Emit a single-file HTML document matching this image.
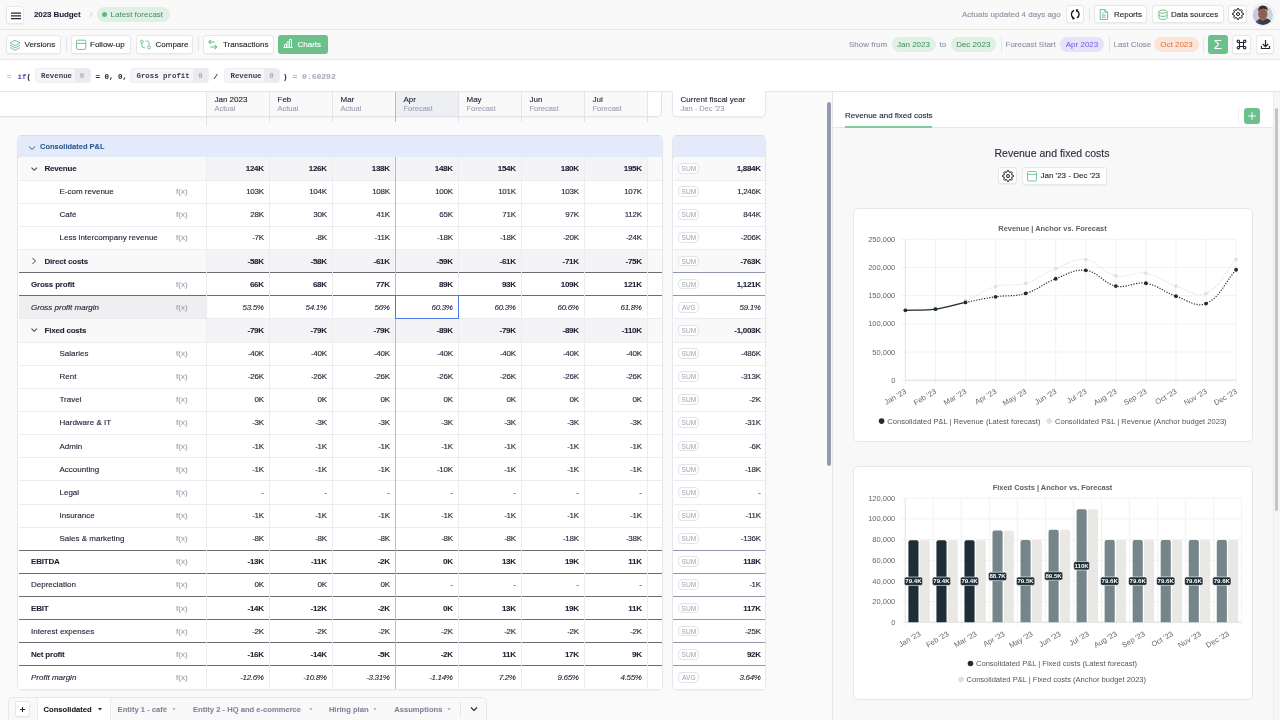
<!DOCTYPE html><html><head><meta charset='utf-8'><style>
*{box-sizing:border-box;margin:0;padding:0}
html,body{width:1280px;height:720px;overflow:hidden;background:#fafafa;font-family:"Liberation Sans",sans-serif;color:#1e2034;font-size:8px}
.abs{position:absolute}
.t{position:absolute;white-space:nowrap;line-height:10px;-webkit-text-stroke:0.12px currentColor}
.t[style*='font-weight:bold']{-webkit-text-stroke:0.08px currentColor}
.btn{position:absolute;background:#fff;border:1px solid #e6e7eb;border-radius:3px;box-shadow:0 1px 1px rgba(0,0,0,.04)}
.pill{position:absolute;border-radius:8px;line-height:15px;text-align:center;white-space:nowrap}
.sep{position:absolute;width:1px;background:#e4e5ea}
.mono{font-family:"Liberation Mono",monospace}
.row{position:absolute;left:0;width:645px}
.cell{position:absolute;top:0;height:100%;white-space:nowrap;text-align:right;padding-right:5px}
.badge{position:absolute;border:1px solid #e2e3e8;border-radius:3px;font-size:6.6px;color:#9ea1b0;text-align:center;background:#fff}
</style></head><body><div style='position:absolute;left:0;top:0;width:1280px;height:720px;overflow:hidden;will-change:transform'><div class='abs' style='left:0;top:0;width:1280px;height:30px;background:#f9f9fa;border-bottom:1px solid #e6e7eb'></div><div class='btn' style='left:5.5px;top:5.5px;width:18.5px;height:18px'><svg width='18' height='18' style='position:absolute;left:-1px;top:-1px' viewBox='0 0 18 18'><path d='M5 7.1h10M5 9.75h10M5 12.5h10' stroke='#23253a' stroke-width='1.25'/></svg></div><div class='t' style='left:34px;top:10px;font-weight:bold;letter-spacing:-0.1px'>2023 Budget</div><div class='t' style='left:90px;top:10px;color:#c5c7d0'>/</div><div class='pill' style='left:97px;top:7px;width:73px;height:15px;background:#dff0e4;color:#468c5e;text-align:left;padding-left:13.6px'>Latest forecast</div><div class='abs' style='left:102px;top:12px;width:5px;height:5px;border-radius:50%;background:#5dbb7c'></div><div class='t' style='left:962px;top:10px;color:#8d91a3'>Actuals updated 4 days ago</div><div class='btn' style='left:1065.5px;top:5.3px;width:18.7px;height:18px'><svg width='20' height='18' style='position:absolute;left:-1px;top:-1px' viewBox='0 0 20 18'><path d='M8.1 5.3 A4.2 4.2 0 0 0 7.6 12.9' fill='none' stroke='#111' stroke-width='1.3'/><path d='M10.5 5.3 A4.2 4.2 0 0 1 10.9 12.9' fill='none' stroke='#111' stroke-width='1.3'/><path d='M6.1 11.6 L9.2 13.5 L6.6 14.8Z M9.7 4.2 L12.4 4.6 L10.8 7.2Z' fill='#111'/></svg></div><div class='sep' style='left:1089px;top:8px;height:13px'></div><div class='btn' style='left:1094.4px;top:5.3px;width:53px;height:18px'><svg width='12' height='14' style='position:absolute;left:4px;top:1px' viewBox='0 0 12 14'><path d='M1.2 2.6H5.9L8.7 5.3V12.4H1.2Z M5.9 2.6V5.3H8.7' fill='none' stroke='#6cc08b' stroke-width='1' stroke-linejoin='round'/><path d='M2.9 6.1H4.6 M2.9 8.1H6.8 M2.9 10.2H6.8' stroke='#6cc08b' stroke-width='1'/></svg><div class='t' style='left:18.6px;top:4px;color:#1f2026'>Reports</div></div><div class='btn' style='left:1152px;top:5.3px;width:71.6px;height:18px'><svg width='12' height='14' style='position:absolute;left:3.5px;top:2px' viewBox='0 0 12 14'><ellipse cx='6' cy='3.6' rx='4.1' ry='1.6' fill='none' stroke='#6cc08b' stroke-width='1'/><path d='M1.9 3.6v6.3c0 .9 1.8 1.6 4.1 1.6s4.1-.7 4.1-1.6V3.6 M1.9 6.8c0 .9 1.8 1.6 4.1 1.6s4.1-.7 4.1-1.6' fill='none' stroke='#6cc08b' stroke-width='1'/></svg><div class='t' style='left:18px;top:4px;color:#1f2026'>Data sources</div></div><div class='btn' style='left:1228.4px;top:5.3px;width:19px;height:18px'><svg width='20' height='18' style='position:absolute;left:-1px;top:-1px' viewBox='0 0 20 18'><g transform='translate(10 9)'><path d='M3.82 -1.18 L5.47 -0.55 L5.47 0.55 L3.82 1.18 L3.54 1.87 L4.26 3.48 L3.48 4.26 L1.87 3.54 L1.18 3.82 L0.55 5.47 L-0.55 5.47 L-1.18 3.82 L-1.87 3.54 L-3.48 4.26 L-4.26 3.48 L-3.54 1.87 L-3.82 1.18 L-5.47 0.55 L-5.47 -0.55 L-3.82 -1.18 L-3.54 -1.87 L-4.26 -3.48 L-3.48 -4.26 L-1.87 -3.54 L-1.18 -3.82 L-0.55 -5.47 L0.55 -5.47 L1.18 -3.82 L1.87 -3.54 L3.48 -4.26 L4.26 -3.48 L3.54 -1.87Z' fill='none' stroke='#15161f' stroke-width='1' stroke-linejoin='round'/><circle r='1.5' fill='none' stroke='#15161f' stroke-width='1'/></g></svg></div><div class='abs' style='left:1251.5px;top:3px;width:23.2px;height:23px;border-radius:50%;background:#fff;border:1px solid #e9eaee'></div><svg width='20' height='20' style='position:absolute;left:1253px;top:4.6px' viewBox='0 0 20 20'><defs><clipPath id='av'><circle cx='10' cy='10' r='10'/></clipPath><linearGradient id='avbg' x1='0' x2='1'><stop offset='0' stop-color='#c9bde0'/><stop offset='.5' stop-color='#d8d6e0'/><stop offset='1' stop-color='#bfd3d3'/></linearGradient></defs><g clip-path='url(#av)'><rect width='20' height='20' fill='url(#avbg)'/><ellipse cx='9.8' cy='9.2' rx='4.6' ry='5.8' fill='#8f5e4c'/><path d='M4.8 6.5 Q5.5 0.5 10 0.6 Q14.8 0.8 14.8 6 Q13 3.5 10 3.8 Q6.5 4 4.8 6.5Z' fill='#3a2e2b'/><path d='M2 20 Q3 14.5 7 14 L10 15.5 L13.5 13.5 Q18 14 19.5 20Z' fill='#3a3a42'/><path d='M2 20 Q3 15 6 14.2 L6 20Z' fill='#5b4a78'/></g></svg><div class='abs' style='left:0;top:30px;width:1280px;height:30px;background:#f9f9fa;border-bottom:1px solid #e6e7eb'></div><div class='btn' style='left:5.5px;top:35.3px;width:55.5px;height:18.6px'><svg width='12' height='12' style='position:absolute;left:2.3px;top:2.4px' viewBox='0 0 12 12'><path d='M6 1.2 L11 3.9 L6 6.6 L1 3.9Z' fill='none' stroke='#6cc08b' stroke-width='0.9' stroke-linejoin='round'/><path d='M1 6.2 L6 8.9 L11 6.2 M1 8.5 L6 11.2 L11 8.5' fill='none' stroke='#6cc08b' stroke-width='0.9' stroke-linejoin='round'/></svg><div class='t' style='left:18px;top:4px;color:#1f2026'>Versions</div></div><div class='sep' style='left:66px;top:37px;height:14px'></div><div class='btn' style='left:71px;top:35.3px;width:60px;height:18.6px'><svg width='12' height='12' style='position:absolute;left:3px;top:2px' viewBox='0 0 12 12'><rect x='1.6' y='2.2' width='9.2' height='9.2' rx='1' fill='none' stroke='#6cc08b' stroke-width='0.95'/><path d='M1.6 5.4h9.2' stroke='#6cc08b' stroke-width='0.95'/></svg><div class='t' style='left:18px;top:4px;color:#1f2026'>Follow-up</div></div><div class='btn' style='left:136px;top:35.3px;width:57px;height:18.6px'><svg width='12' height='12' style='position:absolute;left:3px;top:2px' viewBox='0 0 12 12'><circle cx='1.9' cy='3.6' r='1.45' fill='none' stroke='#6cc08b' stroke-width='0.95'/><circle cx='9' cy='9.45' r='1.45' fill='none' stroke='#6cc08b' stroke-width='0.95'/><path d='M1.8 5.1 V7.3 Q1.8 9.95 5 9.95 M5.6 3 H7.2 Q9 3 9 5 V8' fill='none' stroke='#6cc08b' stroke-width='0.95'/></svg><div class='t' style='left:18.5px;top:4px;color:#1f2026'>Compare</div></div><div class='sep' style='left:198px;top:37px;height:14px'></div><div class='btn' style='left:203.3px;top:35.3px;width:71px;height:18.6px'><svg width='12' height='12' style='position:absolute;left:4px;top:2px' viewBox='0 0 12 12'><path d='M1.2 3.95H6.7 M2.9 1.9 0.9 3.95 2.9 6 M2.2 9H8.6 M6.7 6.9 8.8 9 6.7 11.1' fill='none' stroke='#6cc08b' stroke-width='1.05'/></svg><div class='t' style='left:18.6px;top:4px;color:#1f2026'>Transactions</div></div><div class='abs' style='left:278px;top:35px;width:50px;height:19px;background:#6cc08b;border-radius:3px'><svg width='12' height='12' style='position:absolute;left:4px;top:2px' viewBox='0 0 12 12'><path d='M1.5 10.5h9 M2.5 10.5V7.5h2v3 M5 10.5V5h2v5.5 M7.5 10.5V2.5h2v8' fill='none' stroke='#fff' stroke-width='0.9'/></svg><div class='t' style='left:19.5px;top:4.5px;color:#fff'>Charts</div></div><div class='t' style='left:849px;top:40px;color:#8d91a3'>Show from</div><div class='pill' style='left:891.5px;top:37px;width:44px;height:15px;background:#dff0e4;color:#3f8a58'>Jan 2023</div><div class='t' style='left:939.5px;top:40px;color:#8d91a3'>to</div><div class='pill' style='left:950.5px;top:37px;width:45.5px;height:15px;background:#dff0e4;color:#3f8a58'>Dec 2023</div><div class='sep' style='left:1000.5px;top:37px;height:15px'></div><div class='t' style='left:1005.5px;top:40px;color:#8d91a3'>Forecast Start</div><div class='pill' style='left:1060px;top:37px;width:44px;height:15px;background:#e5e3fa;color:#6a5ad8'>Apr 2023</div><div class='sep' style='left:1108.5px;top:37px;height:15px'></div><div class='t' style='left:1113.5px;top:40px;color:#8d91a3'>Last Close</div><div class='pill' style='left:1154px;top:37px;width:45px;height:15px;background:#fbe5d8;color:#d8703c'>Oct 2023</div><div class='sep' style='left:1203px;top:36px;height:17px;background:#e8e9ed'></div><div class='abs' style='left:1208px;top:35px;width:20px;height:19px;background:#6cc08b;border-radius:3px;color:#fff;font-size:13.5px;line-height:19px;text-align:center'>&#931;</div><div class='btn' style='left:1232.2px;top:35.3px;width:18.8px;height:18.5px'><svg width='19' height='19' style='position:absolute;left:-1px;top:-1px' viewBox='0 0 19 19'><path d='M7.5 7.5h4v4h-4z M7.5 7.5V6.3a1.2 1.2 0 1 0-1.2 1.2h1.2 M11.5 7.5V6.3a1.2 1.2 0 1 1 1.2 1.2h-1.2 M7.5 11.5v1.2a1.2 1.2 0 1 1-1.2-1.2h1.2 M11.5 11.5v1.2a1.2 1.2 0 1 0 1.2-1.2h-1.2' fill='none' stroke='#23253a' stroke-width='1.1'/></svg></div><div class='btn' style='left:1255.9px;top:35.3px;width:18.2px;height:18.5px'><svg width='19' height='19' style='position:absolute;left:-1px;top:-1px' viewBox='0 0 19 19'><path d='M9.5 5v6.5 M6.8 9l2.7 2.7L12.2 9 M5.5 11v2.5h8V11' fill='none' stroke='#23253a' stroke-width='1.2'/></svg></div><div class='abs' style='left:0;top:60px;width:1280px;height:32px;background:#fff;border-bottom:1px solid #e6e7eb'></div><div class='t mono' style='left:7px;top:72px;font-size:7.4px;color:#8d91a3'>=</div><div class='t mono' style='left:17.5px;top:71.5px;font-size:7.5px;font-weight:bold;color:#6a4fc0'>if<span style='color:#23253a'>(</span></div><div class='abs mono' style='left:34.5px;top:68px;width:56px;height:15px;background:#f6f6f8;border:1px solid #eeeef1;border-radius:3px;font-size:7.4px;font-weight:bold;line-height:14px;color:#3a3c50;white-space:nowrap'><span style='position:absolute;left:5.5px'>Revenue</span><span style='position:absolute;right:0;top:0;width:15px;height:13px;line-height:14px;background:#ebebef;color:#a5a8b5;text-align:center;border-radius:0 3px 3px 0'>0</span></div><div class='t mono' style='left:95.5px;top:71.5px;font-size:7.5px;font-weight:bold;color:#2a2c40'>= 0, 0,</div><div class='abs mono' style='left:130px;top:68px;width:79px;height:15px;background:#f6f6f8;border:1px solid #eeeef1;border-radius:3px;font-size:7.4px;font-weight:bold;line-height:14px;color:#3a3c50;white-space:nowrap'><span style='position:absolute;left:5.5px'>Gross profit</span><span style='position:absolute;right:0;top:0;width:15px;height:13px;line-height:14px;background:#ebebef;color:#a5a8b5;text-align:center;border-radius:0 3px 3px 0'>0</span></div><div class='t mono' style='left:213.5px;top:71.5px;font-size:7.5px;font-weight:bold;color:#2a2c40'>/</div><div class='abs mono' style='left:224px;top:68px;width:56px;height:15px;background:#f6f6f8;border:1px solid #eeeef1;border-radius:3px;font-size:7.4px;font-weight:bold;line-height:14px;color:#3a3c50;white-space:nowrap'><span style='position:absolute;left:5.5px'>Revenue</span><span style='position:absolute;right:0;top:0;width:15px;height:13px;line-height:14px;background:#ebebef;color:#a5a8b5;text-align:center;border-radius:0 3px 3px 0'>0</span></div><div class='t mono' style='left:283px;top:71.5px;font-size:7.5px;font-weight:bold;color:#2a2c40'>)</div><div class='t mono' style='left:292.5px;top:71.5px;font-size:8px;font-weight:bold;color:#a9acb8'>= 0.60292</div><div class='abs' style='left:0;top:92px;width:662px;height:24.5px;background:#fff;border-bottom-right-radius:5px;box-shadow:0 1px 1px rgba(0,0,0,.04)'></div><div class='abs' style='left:0;top:116px;width:657px;height:1px;background:#e3e4e9'></div><div class='abs' style='left:206px;top:92px;width:63px;height:24px;background:#f9f9fa'></div><div class='t' style='left:214.5px;top:94.5px'>Jan 2023</div><div class='t' style='left:214.5px;top:103.5px;color:#9ea2b3;font-size:7.5px'>Actual</div><div class='abs' style='left:269px;top:92px;width:63px;height:24px;background:#f9f9fa'></div><div class='t' style='left:277.5px;top:94.5px'>Feb</div><div class='t' style='left:277.5px;top:103.5px;color:#9ea2b3;font-size:7.5px'>Actual</div><div class='abs' style='left:332px;top:92px;width:63px;height:24px;background:#f9f9fa'></div><div class='t' style='left:340.5px;top:94.5px'>Mar</div><div class='t' style='left:340.5px;top:103.5px;color:#9ea2b3;font-size:7.5px'>Actual</div><div class='abs' style='left:395px;top:92px;width:63px;height:24px;background:#eeeff2'></div><div class='t' style='left:403.5px;top:94.5px'>Apr</div><div class='t' style='left:403.5px;top:103.5px;color:#9ea2b3;font-size:7.5px'>Forecast</div><div class='abs' style='left:458px;top:92px;width:63px;height:24px;background:#f9f9fa'></div><div class='t' style='left:466.5px;top:94.5px'>May</div><div class='t' style='left:466.5px;top:103.5px;color:#9ea2b3;font-size:7.5px'>Forecast</div><div class='abs' style='left:521px;top:92px;width:63px;height:24px;background:#f9f9fa'></div><div class='t' style='left:529.5px;top:94.5px'>Jun</div><div class='t' style='left:529.5px;top:103.5px;color:#9ea2b3;font-size:7.5px'>Forecast</div><div class='abs' style='left:584px;top:92px;width:63px;height:24px;background:#f9f9fa'></div><div class='t' style='left:592.5px;top:94.5px'>Jul</div><div class='t' style='left:592.5px;top:103.5px;color:#9ea2b3;font-size:7.5px'>Forecast</div><div class='abs' style='left:647px;top:92px;width:15px;height:25px;background:#fff;border:1px solid #e3e4e9;border-left:none;border-top:none;border-bottom-right-radius:5px'></div><div class='abs' style='left:206px;top:92px;width:1px;height:34px;background:#e3e4e9'></div><div class='abs' style='left:269px;top:92px;width:1px;height:30px;background:#e3e4e9'></div><div class='abs' style='left:332px;top:92px;width:1px;height:30px;background:#e3e4e9'></div><div class='abs' style='left:395px;top:92px;width:1px;height:30px;background:#a9b9f3'></div><div class='abs' style='left:458px;top:92px;width:1px;height:30px;background:#e3e4e9'></div><div class='abs' style='left:521px;top:92px;width:1px;height:30px;background:#e3e4e9'></div><div class='abs' style='left:584px;top:92px;width:1px;height:30px;background:#e3e4e9'></div><div class='abs' style='left:647px;top:92px;width:1px;height:30px;background:#e3e4e9'></div><div class='abs' style='left:672px;top:91px;width:93.5px;height:25.5px;background:#fff;border:1px solid #e6e7eb;border-top:none;border-radius:0 0 5px 5px;box-shadow:0 1px 2px rgba(0,0,0,.05)'></div><div class='t' style='left:680.5px;top:94.5px'>Current fiscal year</div><div class='t' style='left:680.5px;top:103.5px;color:#9ea2b3;font-size:7.5px'>Jan - Dec '23</div><div class='abs' style='left:17px;top:135px;width:645.5px;height:554.605px;background:#fff;border:1px solid #e6e7eb;border-top-color:#cfdcf4;border-radius:5px;box-shadow:0 1px 2px rgba(0,0,0,.04);overflow:hidden' id='tbl'><div class='abs' style='left:0;top:0;width:645px;height:21.5px;background:#e3ebfb;border-bottom:1px solid #c9d8f4'></div><svg width='8' height='6' style='position:absolute;left:9.5px;top:8.5px' viewBox='0 0 8 6'><path d='M1 1.5l3 3 3-3' fill='none' stroke='#2d5592' stroke-width='1'/></svg><div class='t' style='left:22px;top:6px;color:#2d5592;font-weight:bold;font-size:7.5px'>Consolidated P&amp;L</div></div><div class='abs' style='left:672px;top:135px;width:93.5px;height:554.605px;background:#fff;border:1px solid #e6e7eb;border-top-color:#cfdcf4;border-radius:5px;box-shadow:0 1px 2px rgba(0,0,0,.04);overflow:hidden'><div class='abs' style='left:0;top:0;width:93px;height:21.5px;background:#e3ebfb;border-bottom:1px solid #c9d8f4'></div></div><div class='abs' style='left:18.5px;top:157.00px;width:643px;height:23.14px;background:#f9f9fa'></div><div class='abs' style='left:206px;top:157.00px;width:441px;height:23.14px;background:#f4f4f6'></div><div class='abs' style='left:673.5px;top:157.00px;width:91px;height:23.14px;background:#f9f9fa'></div><svg width='8' height='6' style='position:absolute;left:30px;top:165.50px' viewBox='0 0 8 6'><path d='M1.5 1.6l2.7 2.7 2.7-2.7' fill='none' stroke='#3d3f55' stroke-width='1.05'/></svg><div class='t' style='left:44.5px;top:164.00px;font-weight:bold;font-style:normal;letter-spacing:-0.2px;'>Revenue</div><div class='t' style='left:206px;width:57.7px;text-align:right;top:164.00px;font-weight:bold;font-style:normal;letter-spacing:-0.3px;'>124K</div><div class='t' style='left:269px;width:57.7px;text-align:right;top:164.00px;font-weight:bold;font-style:normal;letter-spacing:-0.3px;'>126K</div><div class='t' style='left:332px;width:57.7px;text-align:right;top:164.00px;font-weight:bold;font-style:normal;letter-spacing:-0.3px;'>138K</div><div class='t' style='left:395px;width:57.7px;text-align:right;top:164.00px;font-weight:bold;font-style:normal;letter-spacing:-0.3px;'>148K</div><div class='t' style='left:458px;width:57.7px;text-align:right;top:164.00px;font-weight:bold;font-style:normal;letter-spacing:-0.3px;'>154K</div><div class='t' style='left:521px;width:57.7px;text-align:right;top:164.00px;font-weight:bold;font-style:normal;letter-spacing:-0.3px;'>180K</div><div class='t' style='left:584px;width:57.7px;text-align:right;top:164.00px;font-weight:bold;font-style:normal;letter-spacing:-0.3px;'>195K</div><div class='badge' style='left:678.2px;top:163.00px;width:21.3px;height:10.8px;line-height:9.8px;border-radius:4px'>SUM</div><div class='t' style='left:680px;width:80.7px;text-align:right;top:164.00px;font-weight:bold;font-style:normal;letter-spacing:-0.3px;'>1,884K</div><div class='abs' style='left:18.5px;top:180.13px;width:643px;height:23.14px;background:#fff'></div><div class='abs' style='left:673.5px;top:180.13px;width:91px;height:23.14px;background:#fff'></div><div class='abs' style='left:18.5px;top:179.63px;width:643px;height:1px;background:#ececf0'></div><div class='abs' style='left:673.5px;top:179.63px;width:91px;height:1px;background:#ececf0'></div><div class='t' style='left:59.5px;top:187.13px;font-weight:normal;font-style:normal;'>E-com revenue</div><div class='t' style='left:176px;top:187.13px;color:#9ea1ae'>f(x)</div><div class='t' style='left:206px;width:57.7px;text-align:right;top:187.13px;font-weight:normal;font-style:normal;letter-spacing:-0.3px;'>103K</div><div class='t' style='left:269px;width:57.7px;text-align:right;top:187.13px;font-weight:normal;font-style:normal;letter-spacing:-0.3px;'>104K</div><div class='t' style='left:332px;width:57.7px;text-align:right;top:187.13px;font-weight:normal;font-style:normal;letter-spacing:-0.3px;'>108K</div><div class='t' style='left:395px;width:57.7px;text-align:right;top:187.13px;font-weight:normal;font-style:normal;letter-spacing:-0.3px;'>100K</div><div class='t' style='left:458px;width:57.7px;text-align:right;top:187.13px;font-weight:normal;font-style:normal;letter-spacing:-0.3px;'>101K</div><div class='t' style='left:521px;width:57.7px;text-align:right;top:187.13px;font-weight:normal;font-style:normal;letter-spacing:-0.3px;'>103K</div><div class='t' style='left:584px;width:57.7px;text-align:right;top:187.13px;font-weight:normal;font-style:normal;letter-spacing:-0.3px;'>107K</div><div class='badge' style='left:678.2px;top:186.13px;width:21.3px;height:10.8px;line-height:9.8px;border-radius:4px'>SUM</div><div class='t' style='left:680px;width:80.7px;text-align:right;top:187.13px;font-weight:normal;font-style:normal;letter-spacing:-0.3px;'>1,246K</div><div class='abs' style='left:18.5px;top:203.27px;width:643px;height:23.14px;background:#fff'></div><div class='abs' style='left:673.5px;top:203.27px;width:91px;height:23.14px;background:#fff'></div><div class='abs' style='left:18.5px;top:202.77px;width:643px;height:1px;background:#ececf0'></div><div class='abs' style='left:673.5px;top:202.77px;width:91px;height:1px;background:#ececf0'></div><div class='t' style='left:59.5px;top:210.27px;font-weight:normal;font-style:normal;'>Café</div><div class='t' style='left:176px;top:210.27px;color:#9ea1ae'>f(x)</div><div class='t' style='left:206px;width:57.7px;text-align:right;top:210.27px;font-weight:normal;font-style:normal;letter-spacing:-0.3px;'>28K</div><div class='t' style='left:269px;width:57.7px;text-align:right;top:210.27px;font-weight:normal;font-style:normal;letter-spacing:-0.3px;'>30K</div><div class='t' style='left:332px;width:57.7px;text-align:right;top:210.27px;font-weight:normal;font-style:normal;letter-spacing:-0.3px;'>41K</div><div class='t' style='left:395px;width:57.7px;text-align:right;top:210.27px;font-weight:normal;font-style:normal;letter-spacing:-0.3px;'>65K</div><div class='t' style='left:458px;width:57.7px;text-align:right;top:210.27px;font-weight:normal;font-style:normal;letter-spacing:-0.3px;'>71K</div><div class='t' style='left:521px;width:57.7px;text-align:right;top:210.27px;font-weight:normal;font-style:normal;letter-spacing:-0.3px;'>97K</div><div class='t' style='left:584px;width:57.7px;text-align:right;top:210.27px;font-weight:normal;font-style:normal;letter-spacing:-0.3px;'>112K</div><div class='badge' style='left:678.2px;top:209.27px;width:21.3px;height:10.8px;line-height:9.8px;border-radius:4px'>SUM</div><div class='t' style='left:680px;width:80.7px;text-align:right;top:210.27px;font-weight:normal;font-style:normal;letter-spacing:-0.3px;'>844K</div><div class='abs' style='left:18.5px;top:226.41px;width:643px;height:23.14px;background:#fff'></div><div class='abs' style='left:673.5px;top:226.41px;width:91px;height:23.14px;background:#fff'></div><div class='abs' style='left:18.5px;top:225.91px;width:643px;height:1px;background:#ececf0'></div><div class='abs' style='left:673.5px;top:225.91px;width:91px;height:1px;background:#ececf0'></div><div class='t' style='left:59.5px;top:233.41px;font-weight:normal;font-style:normal;'>Less intercompany revenue</div><div class='t' style='left:176px;top:233.41px;color:#9ea1ae'>f(x)</div><div class='t' style='left:206px;width:57.7px;text-align:right;top:233.41px;font-weight:normal;font-style:normal;letter-spacing:-0.3px;'>-7K</div><div class='t' style='left:269px;width:57.7px;text-align:right;top:233.41px;font-weight:normal;font-style:normal;letter-spacing:-0.3px;'>-8K</div><div class='t' style='left:332px;width:57.7px;text-align:right;top:233.41px;font-weight:normal;font-style:normal;letter-spacing:-0.3px;'>-11K</div><div class='t' style='left:395px;width:57.7px;text-align:right;top:233.41px;font-weight:normal;font-style:normal;letter-spacing:-0.3px;'>-18K</div><div class='t' style='left:458px;width:57.7px;text-align:right;top:233.41px;font-weight:normal;font-style:normal;letter-spacing:-0.3px;'>-18K</div><div class='t' style='left:521px;width:57.7px;text-align:right;top:233.41px;font-weight:normal;font-style:normal;letter-spacing:-0.3px;'>-20K</div><div class='t' style='left:584px;width:57.7px;text-align:right;top:233.41px;font-weight:normal;font-style:normal;letter-spacing:-0.3px;'>-24K</div><div class='badge' style='left:678.2px;top:232.41px;width:21.3px;height:10.8px;line-height:9.8px;border-radius:4px'>SUM</div><div class='t' style='left:680px;width:80.7px;text-align:right;top:233.41px;font-weight:normal;font-style:normal;letter-spacing:-0.3px;'>-206K</div><div class='abs' style='left:18.5px;top:249.54px;width:643px;height:23.14px;background:#f9f9fa'></div><div class='abs' style='left:206px;top:249.54px;width:441px;height:23.14px;background:#f4f4f6'></div><div class='abs' style='left:673.5px;top:249.54px;width:91px;height:23.14px;background:#f9f9fa'></div><div class='abs' style='left:18.5px;top:249.04px;width:643px;height:1px;background:#ececf0'></div><div class='abs' style='left:673.5px;top:249.04px;width:91px;height:1px;background:#ececf0'></div><svg width='6' height='8' style='position:absolute;left:31px;top:257.04px' viewBox='0 0 6 8'><path d='M1.5 1l3 3-3 3' fill='none' stroke='#3a3c4e' stroke-width='1'/></svg><div class='t' style='left:44.5px;top:256.54px;font-weight:bold;font-style:normal;letter-spacing:-0.2px;'>Direct costs</div><div class='t' style='left:206px;width:57.7px;text-align:right;top:256.54px;font-weight:bold;font-style:normal;letter-spacing:-0.3px;'>-58K</div><div class='t' style='left:269px;width:57.7px;text-align:right;top:256.54px;font-weight:bold;font-style:normal;letter-spacing:-0.3px;'>-58K</div><div class='t' style='left:332px;width:57.7px;text-align:right;top:256.54px;font-weight:bold;font-style:normal;letter-spacing:-0.3px;'>-61K</div><div class='t' style='left:395px;width:57.7px;text-align:right;top:256.54px;font-weight:bold;font-style:normal;letter-spacing:-0.3px;'>-59K</div><div class='t' style='left:458px;width:57.7px;text-align:right;top:256.54px;font-weight:bold;font-style:normal;letter-spacing:-0.3px;'>-61K</div><div class='t' style='left:521px;width:57.7px;text-align:right;top:256.54px;font-weight:bold;font-style:normal;letter-spacing:-0.3px;'>-71K</div><div class='t' style='left:584px;width:57.7px;text-align:right;top:256.54px;font-weight:bold;font-style:normal;letter-spacing:-0.3px;'>-75K</div><div class='badge' style='left:678.2px;top:255.54px;width:21.3px;height:10.8px;line-height:9.8px;border-radius:4px'>SUM</div><div class='t' style='left:680px;width:80.7px;text-align:right;top:256.54px;font-weight:bold;font-style:normal;letter-spacing:-0.3px;'>-763K</div><div class='abs' style='left:18.5px;top:272.68px;width:643px;height:23.14px;background:#fff'></div><div class='abs' style='left:673.5px;top:272.68px;width:91px;height:23.14px;background:#fff'></div><div class='abs' style='left:18.5px;top:272.18px;width:643px;height:1px;background:#6c6d72'></div><div class='abs' style='left:672.5px;top:272.18px;width:92.5px;height:1px;background:#9096aa'></div><div class='t' style='left:31px;top:279.68px;font-weight:bold;font-style:normal;letter-spacing:-0.2px;'>Gross profit</div><div class='t' style='left:176px;top:279.68px;color:#9ea1ae'>f(x)</div><div class='t' style='left:206px;width:57.7px;text-align:right;top:279.68px;font-weight:bold;font-style:normal;letter-spacing:-0.3px;'>66K</div><div class='t' style='left:269px;width:57.7px;text-align:right;top:279.68px;font-weight:bold;font-style:normal;letter-spacing:-0.3px;'>68K</div><div class='t' style='left:332px;width:57.7px;text-align:right;top:279.68px;font-weight:bold;font-style:normal;letter-spacing:-0.3px;'>77K</div><div class='t' style='left:395px;width:57.7px;text-align:right;top:279.68px;font-weight:bold;font-style:normal;letter-spacing:-0.3px;'>89K</div><div class='t' style='left:458px;width:57.7px;text-align:right;top:279.68px;font-weight:bold;font-style:normal;letter-spacing:-0.3px;'>93K</div><div class='t' style='left:521px;width:57.7px;text-align:right;top:279.68px;font-weight:bold;font-style:normal;letter-spacing:-0.3px;'>109K</div><div class='t' style='left:584px;width:57.7px;text-align:right;top:279.68px;font-weight:bold;font-style:normal;letter-spacing:-0.3px;'>121K</div><div class='badge' style='left:678.2px;top:278.68px;width:21.3px;height:10.8px;line-height:9.8px;border-radius:4px'>SUM</div><div class='t' style='left:680px;width:80.7px;text-align:right;top:279.68px;font-weight:bold;font-style:normal;letter-spacing:-0.3px;'>1,121K</div><div class='abs' style='left:18.5px;top:295.81px;width:643px;height:23.14px;background:#fff'></div><div class='abs' style='left:18.5px;top:295.81px;width:187.5px;height:23.14px;background:#efeff2'></div><div class='abs' style='left:673.5px;top:295.81px;width:91px;height:23.14px;background:#fff'></div><div class='abs' style='left:18.5px;top:295.31px;width:643px;height:1px;background:#6c6d72'></div><div class='abs' style='left:672.5px;top:295.31px;width:92.5px;height:1px;background:#9096aa'></div><div class='t' style='left:31px;top:302.81px;font-weight:normal;font-style:italic;'>Gross profit margin</div><div class='t' style='left:176px;top:302.81px;color:#9ea1ae'>f(x)</div><div class='t' style='left:206px;width:57.7px;text-align:right;top:302.81px;font-weight:normal;font-style:italic;letter-spacing:-0.3px;'>53.5%</div><div class='t' style='left:269px;width:57.7px;text-align:right;top:302.81px;font-weight:normal;font-style:italic;letter-spacing:-0.3px;'>54.1%</div><div class='t' style='left:332px;width:57.7px;text-align:right;top:302.81px;font-weight:normal;font-style:italic;letter-spacing:-0.3px;'>56%</div><div class='t' style='left:395px;width:57.7px;text-align:right;top:302.81px;font-weight:normal;font-style:italic;letter-spacing:-0.3px;'>60.3%</div><div class='t' style='left:458px;width:57.7px;text-align:right;top:302.81px;font-weight:normal;font-style:italic;letter-spacing:-0.3px;'>60.3%</div><div class='t' style='left:521px;width:57.7px;text-align:right;top:302.81px;font-weight:normal;font-style:italic;letter-spacing:-0.3px;'>60.6%</div><div class='t' style='left:584px;width:57.7px;text-align:right;top:302.81px;font-weight:normal;font-style:italic;letter-spacing:-0.3px;'>61.8%</div><div class='badge' style='left:678.2px;top:301.81px;width:21.3px;height:10.8px;line-height:9.8px;border-radius:4px'>AVG</div><div class='t' style='left:680px;width:80.7px;text-align:right;top:302.81px;font-weight:normal;font-style:italic;letter-spacing:-0.3px;'>59.1%</div><div class='abs' style='left:18.5px;top:318.95px;width:643px;height:23.14px;background:#f9f9fa'></div><div class='abs' style='left:206px;top:318.95px;width:441px;height:23.14px;background:#f4f4f6'></div><div class='abs' style='left:673.5px;top:318.95px;width:91px;height:23.14px;background:#f9f9fa'></div><div class='abs' style='left:18.5px;top:318.45px;width:643px;height:1px;background:#ececf0'></div><div class='abs' style='left:673.5px;top:318.45px;width:91px;height:1px;background:#ececf0'></div><svg width='8' height='6' style='position:absolute;left:30px;top:327.45px' viewBox='0 0 8 6'><path d='M1.5 1.6l2.7 2.7 2.7-2.7' fill='none' stroke='#3d3f55' stroke-width='1.05'/></svg><div class='t' style='left:44.5px;top:325.95px;font-weight:bold;font-style:normal;letter-spacing:-0.2px;'>Fixed costs</div><div class='t' style='left:206px;width:57.7px;text-align:right;top:325.95px;font-weight:bold;font-style:normal;letter-spacing:-0.3px;'>-79K</div><div class='t' style='left:269px;width:57.7px;text-align:right;top:325.95px;font-weight:bold;font-style:normal;letter-spacing:-0.3px;'>-79K</div><div class='t' style='left:332px;width:57.7px;text-align:right;top:325.95px;font-weight:bold;font-style:normal;letter-spacing:-0.3px;'>-79K</div><div class='t' style='left:395px;width:57.7px;text-align:right;top:325.95px;font-weight:bold;font-style:normal;letter-spacing:-0.3px;'>-89K</div><div class='t' style='left:458px;width:57.7px;text-align:right;top:325.95px;font-weight:bold;font-style:normal;letter-spacing:-0.3px;'>-79K</div><div class='t' style='left:521px;width:57.7px;text-align:right;top:325.95px;font-weight:bold;font-style:normal;letter-spacing:-0.3px;'>-89K</div><div class='t' style='left:584px;width:57.7px;text-align:right;top:325.95px;font-weight:bold;font-style:normal;letter-spacing:-0.3px;'>-110K</div><div class='badge' style='left:678.2px;top:324.95px;width:21.3px;height:10.8px;line-height:9.8px;border-radius:4px'>SUM</div><div class='t' style='left:680px;width:80.7px;text-align:right;top:325.95px;font-weight:bold;font-style:normal;letter-spacing:-0.3px;'>-1,003K</div><div class='abs' style='left:18.5px;top:342.08px;width:643px;height:23.14px;background:#fff'></div><div class='abs' style='left:673.5px;top:342.08px;width:91px;height:23.14px;background:#fff'></div><div class='abs' style='left:18.5px;top:341.58px;width:643px;height:1px;background:#ececf0'></div><div class='abs' style='left:673.5px;top:341.58px;width:91px;height:1px;background:#ececf0'></div><div class='t' style='left:59.5px;top:349.08px;font-weight:normal;font-style:normal;'>Salaries</div><div class='t' style='left:176px;top:349.08px;color:#9ea1ae'>f(x)</div><div class='t' style='left:206px;width:57.7px;text-align:right;top:349.08px;font-weight:normal;font-style:normal;letter-spacing:-0.3px;'>-40K</div><div class='t' style='left:269px;width:57.7px;text-align:right;top:349.08px;font-weight:normal;font-style:normal;letter-spacing:-0.3px;'>-40K</div><div class='t' style='left:332px;width:57.7px;text-align:right;top:349.08px;font-weight:normal;font-style:normal;letter-spacing:-0.3px;'>-40K</div><div class='t' style='left:395px;width:57.7px;text-align:right;top:349.08px;font-weight:normal;font-style:normal;letter-spacing:-0.3px;'>-40K</div><div class='t' style='left:458px;width:57.7px;text-align:right;top:349.08px;font-weight:normal;font-style:normal;letter-spacing:-0.3px;'>-40K</div><div class='t' style='left:521px;width:57.7px;text-align:right;top:349.08px;font-weight:normal;font-style:normal;letter-spacing:-0.3px;'>-40K</div><div class='t' style='left:584px;width:57.7px;text-align:right;top:349.08px;font-weight:normal;font-style:normal;letter-spacing:-0.3px;'>-40K</div><div class='badge' style='left:678.2px;top:348.08px;width:21.3px;height:10.8px;line-height:9.8px;border-radius:4px'>SUM</div><div class='t' style='left:680px;width:80.7px;text-align:right;top:349.08px;font-weight:normal;font-style:normal;letter-spacing:-0.3px;'>-486K</div><div class='abs' style='left:18.5px;top:365.22px;width:643px;height:23.14px;background:#fff'></div><div class='abs' style='left:673.5px;top:365.22px;width:91px;height:23.14px;background:#fff'></div><div class='abs' style='left:18.5px;top:364.72px;width:643px;height:1px;background:#ececf0'></div><div class='abs' style='left:673.5px;top:364.72px;width:91px;height:1px;background:#ececf0'></div><div class='t' style='left:59.5px;top:372.22px;font-weight:normal;font-style:normal;'>Rent</div><div class='t' style='left:176px;top:372.22px;color:#9ea1ae'>f(x)</div><div class='t' style='left:206px;width:57.7px;text-align:right;top:372.22px;font-weight:normal;font-style:normal;letter-spacing:-0.3px;'>-26K</div><div class='t' style='left:269px;width:57.7px;text-align:right;top:372.22px;font-weight:normal;font-style:normal;letter-spacing:-0.3px;'>-26K</div><div class='t' style='left:332px;width:57.7px;text-align:right;top:372.22px;font-weight:normal;font-style:normal;letter-spacing:-0.3px;'>-26K</div><div class='t' style='left:395px;width:57.7px;text-align:right;top:372.22px;font-weight:normal;font-style:normal;letter-spacing:-0.3px;'>-26K</div><div class='t' style='left:458px;width:57.7px;text-align:right;top:372.22px;font-weight:normal;font-style:normal;letter-spacing:-0.3px;'>-26K</div><div class='t' style='left:521px;width:57.7px;text-align:right;top:372.22px;font-weight:normal;font-style:normal;letter-spacing:-0.3px;'>-26K</div><div class='t' style='left:584px;width:57.7px;text-align:right;top:372.22px;font-weight:normal;font-style:normal;letter-spacing:-0.3px;'>-26K</div><div class='badge' style='left:678.2px;top:371.22px;width:21.3px;height:10.8px;line-height:9.8px;border-radius:4px'>SUM</div><div class='t' style='left:680px;width:80.7px;text-align:right;top:372.22px;font-weight:normal;font-style:normal;letter-spacing:-0.3px;'>-313K</div><div class='abs' style='left:18.5px;top:388.35px;width:643px;height:23.14px;background:#fff'></div><div class='abs' style='left:673.5px;top:388.35px;width:91px;height:23.14px;background:#fff'></div><div class='abs' style='left:18.5px;top:387.85px;width:643px;height:1px;background:#ececf0'></div><div class='abs' style='left:673.5px;top:387.85px;width:91px;height:1px;background:#ececf0'></div><div class='t' style='left:59.5px;top:395.35px;font-weight:normal;font-style:normal;'>Travel</div><div class='t' style='left:176px;top:395.35px;color:#9ea1ae'>f(x)</div><div class='t' style='left:206px;width:57.7px;text-align:right;top:395.35px;font-weight:normal;font-style:normal;letter-spacing:-0.3px;'>0K</div><div class='t' style='left:269px;width:57.7px;text-align:right;top:395.35px;font-weight:normal;font-style:normal;letter-spacing:-0.3px;'>0K</div><div class='t' style='left:332px;width:57.7px;text-align:right;top:395.35px;font-weight:normal;font-style:normal;letter-spacing:-0.3px;'>0K</div><div class='t' style='left:395px;width:57.7px;text-align:right;top:395.35px;font-weight:normal;font-style:normal;letter-spacing:-0.3px;'>0K</div><div class='t' style='left:458px;width:57.7px;text-align:right;top:395.35px;font-weight:normal;font-style:normal;letter-spacing:-0.3px;'>0K</div><div class='t' style='left:521px;width:57.7px;text-align:right;top:395.35px;font-weight:normal;font-style:normal;letter-spacing:-0.3px;'>0K</div><div class='t' style='left:584px;width:57.7px;text-align:right;top:395.35px;font-weight:normal;font-style:normal;letter-spacing:-0.3px;'>0K</div><div class='badge' style='left:678.2px;top:394.35px;width:21.3px;height:10.8px;line-height:9.8px;border-radius:4px'>SUM</div><div class='t' style='left:680px;width:80.7px;text-align:right;top:395.35px;font-weight:normal;font-style:normal;letter-spacing:-0.3px;'>-2K</div><div class='abs' style='left:18.5px;top:411.49px;width:643px;height:23.14px;background:#fff'></div><div class='abs' style='left:673.5px;top:411.49px;width:91px;height:23.14px;background:#fff'></div><div class='abs' style='left:18.5px;top:410.99px;width:643px;height:1px;background:#ececf0'></div><div class='abs' style='left:673.5px;top:410.99px;width:91px;height:1px;background:#ececf0'></div><div class='t' style='left:59.5px;top:418.49px;font-weight:normal;font-style:normal;'>Hardware &amp; IT</div><div class='t' style='left:176px;top:418.49px;color:#9ea1ae'>f(x)</div><div class='t' style='left:206px;width:57.7px;text-align:right;top:418.49px;font-weight:normal;font-style:normal;letter-spacing:-0.3px;'>-3K</div><div class='t' style='left:269px;width:57.7px;text-align:right;top:418.49px;font-weight:normal;font-style:normal;letter-spacing:-0.3px;'>-3K</div><div class='t' style='left:332px;width:57.7px;text-align:right;top:418.49px;font-weight:normal;font-style:normal;letter-spacing:-0.3px;'>-3K</div><div class='t' style='left:395px;width:57.7px;text-align:right;top:418.49px;font-weight:normal;font-style:normal;letter-spacing:-0.3px;'>-3K</div><div class='t' style='left:458px;width:57.7px;text-align:right;top:418.49px;font-weight:normal;font-style:normal;letter-spacing:-0.3px;'>-3K</div><div class='t' style='left:521px;width:57.7px;text-align:right;top:418.49px;font-weight:normal;font-style:normal;letter-spacing:-0.3px;'>-3K</div><div class='t' style='left:584px;width:57.7px;text-align:right;top:418.49px;font-weight:normal;font-style:normal;letter-spacing:-0.3px;'>-3K</div><div class='badge' style='left:678.2px;top:417.49px;width:21.3px;height:10.8px;line-height:9.8px;border-radius:4px'>SUM</div><div class='t' style='left:680px;width:80.7px;text-align:right;top:418.49px;font-weight:normal;font-style:normal;letter-spacing:-0.3px;'>-31K</div><div class='abs' style='left:18.5px;top:434.62px;width:643px;height:23.14px;background:#fff'></div><div class='abs' style='left:673.5px;top:434.62px;width:91px;height:23.14px;background:#fff'></div><div class='abs' style='left:18.5px;top:434.12px;width:643px;height:1px;background:#ececf0'></div><div class='abs' style='left:673.5px;top:434.12px;width:91px;height:1px;background:#ececf0'></div><div class='t' style='left:59.5px;top:441.62px;font-weight:normal;font-style:normal;'>Admin</div><div class='t' style='left:176px;top:441.62px;color:#9ea1ae'>f(x)</div><div class='t' style='left:206px;width:57.7px;text-align:right;top:441.62px;font-weight:normal;font-style:normal;letter-spacing:-0.3px;'>-1K</div><div class='t' style='left:269px;width:57.7px;text-align:right;top:441.62px;font-weight:normal;font-style:normal;letter-spacing:-0.3px;'>-1K</div><div class='t' style='left:332px;width:57.7px;text-align:right;top:441.62px;font-weight:normal;font-style:normal;letter-spacing:-0.3px;'>-1K</div><div class='t' style='left:395px;width:57.7px;text-align:right;top:441.62px;font-weight:normal;font-style:normal;letter-spacing:-0.3px;'>-1K</div><div class='t' style='left:458px;width:57.7px;text-align:right;top:441.62px;font-weight:normal;font-style:normal;letter-spacing:-0.3px;'>-1K</div><div class='t' style='left:521px;width:57.7px;text-align:right;top:441.62px;font-weight:normal;font-style:normal;letter-spacing:-0.3px;'>-1K</div><div class='t' style='left:584px;width:57.7px;text-align:right;top:441.62px;font-weight:normal;font-style:normal;letter-spacing:-0.3px;'>-1K</div><div class='badge' style='left:678.2px;top:440.62px;width:21.3px;height:10.8px;line-height:9.8px;border-radius:4px'>SUM</div><div class='t' style='left:680px;width:80.7px;text-align:right;top:441.62px;font-weight:normal;font-style:normal;letter-spacing:-0.3px;'>-6K</div><div class='abs' style='left:18.5px;top:457.75px;width:643px;height:23.14px;background:#fff'></div><div class='abs' style='left:673.5px;top:457.75px;width:91px;height:23.14px;background:#fff'></div><div class='abs' style='left:18.5px;top:457.25px;width:643px;height:1px;background:#ececf0'></div><div class='abs' style='left:673.5px;top:457.25px;width:91px;height:1px;background:#ececf0'></div><div class='t' style='left:59.5px;top:464.75px;font-weight:normal;font-style:normal;'>Accounting</div><div class='t' style='left:176px;top:464.75px;color:#9ea1ae'>f(x)</div><div class='t' style='left:206px;width:57.7px;text-align:right;top:464.75px;font-weight:normal;font-style:normal;letter-spacing:-0.3px;'>-1K</div><div class='t' style='left:269px;width:57.7px;text-align:right;top:464.75px;font-weight:normal;font-style:normal;letter-spacing:-0.3px;'>-1K</div><div class='t' style='left:332px;width:57.7px;text-align:right;top:464.75px;font-weight:normal;font-style:normal;letter-spacing:-0.3px;'>-1K</div><div class='t' style='left:395px;width:57.7px;text-align:right;top:464.75px;font-weight:normal;font-style:normal;letter-spacing:-0.3px;'>-10K</div><div class='t' style='left:458px;width:57.7px;text-align:right;top:464.75px;font-weight:normal;font-style:normal;letter-spacing:-0.3px;'>-1K</div><div class='t' style='left:521px;width:57.7px;text-align:right;top:464.75px;font-weight:normal;font-style:normal;letter-spacing:-0.3px;'>-1K</div><div class='t' style='left:584px;width:57.7px;text-align:right;top:464.75px;font-weight:normal;font-style:normal;letter-spacing:-0.3px;'>-1K</div><div class='badge' style='left:678.2px;top:463.75px;width:21.3px;height:10.8px;line-height:9.8px;border-radius:4px'>SUM</div><div class='t' style='left:680px;width:80.7px;text-align:right;top:464.75px;font-weight:normal;font-style:normal;letter-spacing:-0.3px;'>-18K</div><div class='abs' style='left:18.5px;top:480.89px;width:643px;height:23.14px;background:#fff'></div><div class='abs' style='left:673.5px;top:480.89px;width:91px;height:23.14px;background:#fff'></div><div class='abs' style='left:18.5px;top:480.39px;width:643px;height:1px;background:#ececf0'></div><div class='abs' style='left:673.5px;top:480.39px;width:91px;height:1px;background:#ececf0'></div><div class='t' style='left:59.5px;top:487.89px;font-weight:normal;font-style:normal;'>Legal</div><div class='t' style='left:176px;top:487.89px;color:#9ea1ae'>f(x)</div><div class='t' style='left:206px;width:57.7px;text-align:right;top:487.89px;font-weight:normal;font-style:normal;letter-spacing:-0.3px;'>-</div><div class='t' style='left:269px;width:57.7px;text-align:right;top:487.89px;font-weight:normal;font-style:normal;letter-spacing:-0.3px;'>-</div><div class='t' style='left:332px;width:57.7px;text-align:right;top:487.89px;font-weight:normal;font-style:normal;letter-spacing:-0.3px;'>-</div><div class='t' style='left:395px;width:57.7px;text-align:right;top:487.89px;font-weight:normal;font-style:normal;letter-spacing:-0.3px;'>-</div><div class='t' style='left:458px;width:57.7px;text-align:right;top:487.89px;font-weight:normal;font-style:normal;letter-spacing:-0.3px;'>-</div><div class='t' style='left:521px;width:57.7px;text-align:right;top:487.89px;font-weight:normal;font-style:normal;letter-spacing:-0.3px;'>-</div><div class='t' style='left:584px;width:57.7px;text-align:right;top:487.89px;font-weight:normal;font-style:normal;letter-spacing:-0.3px;'>-</div><div class='badge' style='left:678.2px;top:486.89px;width:21.3px;height:10.8px;line-height:9.8px;border-radius:4px'>SUM</div><div class='t' style='left:680px;width:80.7px;text-align:right;top:487.89px;font-weight:normal;font-style:normal;letter-spacing:-0.3px;'>-</div><div class='abs' style='left:18.5px;top:504.03px;width:643px;height:23.14px;background:#fff'></div><div class='abs' style='left:673.5px;top:504.03px;width:91px;height:23.14px;background:#fff'></div><div class='abs' style='left:18.5px;top:503.53px;width:643px;height:1px;background:#ececf0'></div><div class='abs' style='left:673.5px;top:503.53px;width:91px;height:1px;background:#ececf0'></div><div class='t' style='left:59.5px;top:511.03px;font-weight:normal;font-style:normal;'>Insurance</div><div class='t' style='left:176px;top:511.03px;color:#9ea1ae'>f(x)</div><div class='t' style='left:206px;width:57.7px;text-align:right;top:511.03px;font-weight:normal;font-style:normal;letter-spacing:-0.3px;'>-1K</div><div class='t' style='left:269px;width:57.7px;text-align:right;top:511.03px;font-weight:normal;font-style:normal;letter-spacing:-0.3px;'>-1K</div><div class='t' style='left:332px;width:57.7px;text-align:right;top:511.03px;font-weight:normal;font-style:normal;letter-spacing:-0.3px;'>-1K</div><div class='t' style='left:395px;width:57.7px;text-align:right;top:511.03px;font-weight:normal;font-style:normal;letter-spacing:-0.3px;'>-1K</div><div class='t' style='left:458px;width:57.7px;text-align:right;top:511.03px;font-weight:normal;font-style:normal;letter-spacing:-0.3px;'>-1K</div><div class='t' style='left:521px;width:57.7px;text-align:right;top:511.03px;font-weight:normal;font-style:normal;letter-spacing:-0.3px;'>-1K</div><div class='t' style='left:584px;width:57.7px;text-align:right;top:511.03px;font-weight:normal;font-style:normal;letter-spacing:-0.3px;'>-1K</div><div class='badge' style='left:678.2px;top:510.03px;width:21.3px;height:10.8px;line-height:9.8px;border-radius:4px'>SUM</div><div class='t' style='left:680px;width:80.7px;text-align:right;top:511.03px;font-weight:normal;font-style:normal;letter-spacing:-0.3px;'>-11K</div><div class='abs' style='left:18.5px;top:527.16px;width:643px;height:23.14px;background:#fff'></div><div class='abs' style='left:673.5px;top:527.16px;width:91px;height:23.14px;background:#fff'></div><div class='abs' style='left:18.5px;top:526.66px;width:643px;height:1px;background:#ececf0'></div><div class='abs' style='left:673.5px;top:526.66px;width:91px;height:1px;background:#ececf0'></div><div class='t' style='left:59.5px;top:534.16px;font-weight:normal;font-style:normal;'>Sales &amp; marketing</div><div class='t' style='left:176px;top:534.16px;color:#9ea1ae'>f(x)</div><div class='t' style='left:206px;width:57.7px;text-align:right;top:534.16px;font-weight:normal;font-style:normal;letter-spacing:-0.3px;'>-8K</div><div class='t' style='left:269px;width:57.7px;text-align:right;top:534.16px;font-weight:normal;font-style:normal;letter-spacing:-0.3px;'>-8K</div><div class='t' style='left:332px;width:57.7px;text-align:right;top:534.16px;font-weight:normal;font-style:normal;letter-spacing:-0.3px;'>-8K</div><div class='t' style='left:395px;width:57.7px;text-align:right;top:534.16px;font-weight:normal;font-style:normal;letter-spacing:-0.3px;'>-8K</div><div class='t' style='left:458px;width:57.7px;text-align:right;top:534.16px;font-weight:normal;font-style:normal;letter-spacing:-0.3px;'>-8K</div><div class='t' style='left:521px;width:57.7px;text-align:right;top:534.16px;font-weight:normal;font-style:normal;letter-spacing:-0.3px;'>-18K</div><div class='t' style='left:584px;width:57.7px;text-align:right;top:534.16px;font-weight:normal;font-style:normal;letter-spacing:-0.3px;'>-38K</div><div class='badge' style='left:678.2px;top:533.16px;width:21.3px;height:10.8px;line-height:9.8px;border-radius:4px'>SUM</div><div class='t' style='left:680px;width:80.7px;text-align:right;top:534.16px;font-weight:normal;font-style:normal;letter-spacing:-0.3px;'>-136K</div><div class='abs' style='left:18.5px;top:550.30px;width:643px;height:23.14px;background:#fff'></div><div class='abs' style='left:673.5px;top:550.30px;width:91px;height:23.14px;background:#fff'></div><div class='abs' style='left:18.5px;top:549.80px;width:643px;height:1px;background:#6c6d72'></div><div class='abs' style='left:672.5px;top:549.80px;width:92.5px;height:1px;background:#9096aa'></div><div class='t' style='left:31px;top:557.30px;font-weight:bold;font-style:normal;letter-spacing:-0.2px;'>EBITDA</div><div class='t' style='left:176px;top:557.30px;color:#9ea1ae'>f(x)</div><div class='t' style='left:206px;width:57.7px;text-align:right;top:557.30px;font-weight:bold;font-style:normal;letter-spacing:-0.3px;'>-13K</div><div class='t' style='left:269px;width:57.7px;text-align:right;top:557.30px;font-weight:bold;font-style:normal;letter-spacing:-0.3px;'>-11K</div><div class='t' style='left:332px;width:57.7px;text-align:right;top:557.30px;font-weight:bold;font-style:normal;letter-spacing:-0.3px;'>-2K</div><div class='t' style='left:395px;width:57.7px;text-align:right;top:557.30px;font-weight:bold;font-style:normal;letter-spacing:-0.3px;'>0K</div><div class='t' style='left:458px;width:57.7px;text-align:right;top:557.30px;font-weight:bold;font-style:normal;letter-spacing:-0.3px;'>13K</div><div class='t' style='left:521px;width:57.7px;text-align:right;top:557.30px;font-weight:bold;font-style:normal;letter-spacing:-0.3px;'>19K</div><div class='t' style='left:584px;width:57.7px;text-align:right;top:557.30px;font-weight:bold;font-style:normal;letter-spacing:-0.3px;'>11K</div><div class='badge' style='left:678.2px;top:556.30px;width:21.3px;height:10.8px;line-height:9.8px;border-radius:4px'>SUM</div><div class='t' style='left:680px;width:80.7px;text-align:right;top:557.30px;font-weight:bold;font-style:normal;letter-spacing:-0.3px;'>118K</div><div class='abs' style='left:18.5px;top:573.43px;width:643px;height:23.14px;background:#fff'></div><div class='abs' style='left:673.5px;top:573.43px;width:91px;height:23.14px;background:#fff'></div><div class='abs' style='left:18.5px;top:572.93px;width:643px;height:1px;background:#6c6d72'></div><div class='abs' style='left:672.5px;top:572.93px;width:92.5px;height:1px;background:#9096aa'></div><div class='t' style='left:31px;top:580.43px;font-weight:normal;font-style:normal;'>Depreciation</div><div class='t' style='left:176px;top:580.43px;color:#9ea1ae'>f(x)</div><div class='t' style='left:206px;width:57.7px;text-align:right;top:580.43px;font-weight:normal;font-style:normal;letter-spacing:-0.3px;'>0K</div><div class='t' style='left:269px;width:57.7px;text-align:right;top:580.43px;font-weight:normal;font-style:normal;letter-spacing:-0.3px;'>0K</div><div class='t' style='left:332px;width:57.7px;text-align:right;top:580.43px;font-weight:normal;font-style:normal;letter-spacing:-0.3px;'>0K</div><div class='t' style='left:395px;width:57.7px;text-align:right;top:580.43px;font-weight:normal;font-style:normal;letter-spacing:-0.3px;'>-</div><div class='t' style='left:458px;width:57.7px;text-align:right;top:580.43px;font-weight:normal;font-style:normal;letter-spacing:-0.3px;'>-</div><div class='t' style='left:521px;width:57.7px;text-align:right;top:580.43px;font-weight:normal;font-style:normal;letter-spacing:-0.3px;'>-</div><div class='t' style='left:584px;width:57.7px;text-align:right;top:580.43px;font-weight:normal;font-style:normal;letter-spacing:-0.3px;'>-</div><div class='badge' style='left:678.2px;top:579.43px;width:21.3px;height:10.8px;line-height:9.8px;border-radius:4px'>SUM</div><div class='t' style='left:680px;width:80.7px;text-align:right;top:580.43px;font-weight:normal;font-style:normal;letter-spacing:-0.3px;'>-1K</div><div class='abs' style='left:18.5px;top:596.57px;width:643px;height:23.14px;background:#fff'></div><div class='abs' style='left:673.5px;top:596.57px;width:91px;height:23.14px;background:#fff'></div><div class='abs' style='left:18.5px;top:596.07px;width:643px;height:1px;background:#6c6d72'></div><div class='abs' style='left:672.5px;top:596.07px;width:92.5px;height:1px;background:#9096aa'></div><div class='t' style='left:31px;top:603.57px;font-weight:bold;font-style:normal;letter-spacing:-0.2px;'>EBIT</div><div class='t' style='left:176px;top:603.57px;color:#9ea1ae'>f(x)</div><div class='t' style='left:206px;width:57.7px;text-align:right;top:603.57px;font-weight:bold;font-style:normal;letter-spacing:-0.3px;'>-14K</div><div class='t' style='left:269px;width:57.7px;text-align:right;top:603.57px;font-weight:bold;font-style:normal;letter-spacing:-0.3px;'>-12K</div><div class='t' style='left:332px;width:57.7px;text-align:right;top:603.57px;font-weight:bold;font-style:normal;letter-spacing:-0.3px;'>-2K</div><div class='t' style='left:395px;width:57.7px;text-align:right;top:603.57px;font-weight:bold;font-style:normal;letter-spacing:-0.3px;'>0K</div><div class='t' style='left:458px;width:57.7px;text-align:right;top:603.57px;font-weight:bold;font-style:normal;letter-spacing:-0.3px;'>13K</div><div class='t' style='left:521px;width:57.7px;text-align:right;top:603.57px;font-weight:bold;font-style:normal;letter-spacing:-0.3px;'>19K</div><div class='t' style='left:584px;width:57.7px;text-align:right;top:603.57px;font-weight:bold;font-style:normal;letter-spacing:-0.3px;'>11K</div><div class='badge' style='left:678.2px;top:602.57px;width:21.3px;height:10.8px;line-height:9.8px;border-radius:4px'>SUM</div><div class='t' style='left:680px;width:80.7px;text-align:right;top:603.57px;font-weight:bold;font-style:normal;letter-spacing:-0.3px;'>117K</div><div class='abs' style='left:18.5px;top:619.70px;width:643px;height:23.14px;background:#fff'></div><div class='abs' style='left:673.5px;top:619.70px;width:91px;height:23.14px;background:#fff'></div><div class='abs' style='left:18.5px;top:619.20px;width:643px;height:1px;background:#6c6d72'></div><div class='abs' style='left:672.5px;top:619.20px;width:92.5px;height:1px;background:#9096aa'></div><div class='t' style='left:31px;top:626.70px;font-weight:normal;font-style:normal;'>Interest expenses</div><div class='t' style='left:176px;top:626.70px;color:#9ea1ae'>f(x)</div><div class='t' style='left:206px;width:57.7px;text-align:right;top:626.70px;font-weight:normal;font-style:normal;letter-spacing:-0.3px;'>-2K</div><div class='t' style='left:269px;width:57.7px;text-align:right;top:626.70px;font-weight:normal;font-style:normal;letter-spacing:-0.3px;'>-2K</div><div class='t' style='left:332px;width:57.7px;text-align:right;top:626.70px;font-weight:normal;font-style:normal;letter-spacing:-0.3px;'>-2K</div><div class='t' style='left:395px;width:57.7px;text-align:right;top:626.70px;font-weight:normal;font-style:normal;letter-spacing:-0.3px;'>-2K</div><div class='t' style='left:458px;width:57.7px;text-align:right;top:626.70px;font-weight:normal;font-style:normal;letter-spacing:-0.3px;'>-2K</div><div class='t' style='left:521px;width:57.7px;text-align:right;top:626.70px;font-weight:normal;font-style:normal;letter-spacing:-0.3px;'>-2K</div><div class='t' style='left:584px;width:57.7px;text-align:right;top:626.70px;font-weight:normal;font-style:normal;letter-spacing:-0.3px;'>-2K</div><div class='badge' style='left:678.2px;top:625.70px;width:21.3px;height:10.8px;line-height:9.8px;border-radius:4px'>SUM</div><div class='t' style='left:680px;width:80.7px;text-align:right;top:626.70px;font-weight:normal;font-style:normal;letter-spacing:-0.3px;'>-25K</div><div class='abs' style='left:18.5px;top:642.84px;width:643px;height:23.14px;background:#fff'></div><div class='abs' style='left:673.5px;top:642.84px;width:91px;height:23.14px;background:#fff'></div><div class='abs' style='left:18.5px;top:642.34px;width:643px;height:1px;background:#6c6d72'></div><div class='abs' style='left:672.5px;top:642.34px;width:92.5px;height:1px;background:#9096aa'></div><div class='t' style='left:31px;top:649.84px;font-weight:bold;font-style:normal;letter-spacing:-0.2px;'>Net profit</div><div class='t' style='left:176px;top:649.84px;color:#9ea1ae'>f(x)</div><div class='t' style='left:206px;width:57.7px;text-align:right;top:649.84px;font-weight:bold;font-style:normal;letter-spacing:-0.3px;'>-16K</div><div class='t' style='left:269px;width:57.7px;text-align:right;top:649.84px;font-weight:bold;font-style:normal;letter-spacing:-0.3px;'>-14K</div><div class='t' style='left:332px;width:57.7px;text-align:right;top:649.84px;font-weight:bold;font-style:normal;letter-spacing:-0.3px;'>-5K</div><div class='t' style='left:395px;width:57.7px;text-align:right;top:649.84px;font-weight:bold;font-style:normal;letter-spacing:-0.3px;'>-2K</div><div class='t' style='left:458px;width:57.7px;text-align:right;top:649.84px;font-weight:bold;font-style:normal;letter-spacing:-0.3px;'>11K</div><div class='t' style='left:521px;width:57.7px;text-align:right;top:649.84px;font-weight:bold;font-style:normal;letter-spacing:-0.3px;'>17K</div><div class='t' style='left:584px;width:57.7px;text-align:right;top:649.84px;font-weight:bold;font-style:normal;letter-spacing:-0.3px;'>9K</div><div class='badge' style='left:678.2px;top:648.84px;width:21.3px;height:10.8px;line-height:9.8px;border-radius:4px'>SUM</div><div class='t' style='left:680px;width:80.7px;text-align:right;top:649.84px;font-weight:bold;font-style:normal;letter-spacing:-0.3px;'>92K</div><div class='abs' style='left:18.5px;top:665.97px;width:643px;height:23.14px;background:#fff'></div><div class='abs' style='left:673.5px;top:665.97px;width:91px;height:23.14px;background:#fff'></div><div class='abs' style='left:18.5px;top:665.47px;width:643px;height:1px;background:#6c6d72'></div><div class='abs' style='left:672.5px;top:665.47px;width:92.5px;height:1px;background:#9096aa'></div><div class='t' style='left:31px;top:672.97px;font-weight:normal;font-style:italic;'>Profit margin</div><div class='t' style='left:176px;top:672.97px;color:#9ea1ae'>f(x)</div><div class='t' style='left:206px;width:57.7px;text-align:right;top:672.97px;font-weight:normal;font-style:italic;letter-spacing:-0.3px;'>-12.6%</div><div class='t' style='left:269px;width:57.7px;text-align:right;top:672.97px;font-weight:normal;font-style:italic;letter-spacing:-0.3px;'>-10.8%</div><div class='t' style='left:332px;width:57.7px;text-align:right;top:672.97px;font-weight:normal;font-style:italic;letter-spacing:-0.3px;'>-3.31%</div><div class='t' style='left:395px;width:57.7px;text-align:right;top:672.97px;font-weight:normal;font-style:italic;letter-spacing:-0.3px;'>-1.14%</div><div class='t' style='left:458px;width:57.7px;text-align:right;top:672.97px;font-weight:normal;font-style:italic;letter-spacing:-0.3px;'>7.2%</div><div class='t' style='left:521px;width:57.7px;text-align:right;top:672.97px;font-weight:normal;font-style:italic;letter-spacing:-0.3px;'>9.65%</div><div class='t' style='left:584px;width:57.7px;text-align:right;top:672.97px;font-weight:normal;font-style:italic;letter-spacing:-0.3px;'>4.55%</div><div class='badge' style='left:678.2px;top:671.97px;width:21.3px;height:10.8px;line-height:9.8px;border-radius:4px'>AVG</div><div class='t' style='left:680px;width:80.7px;text-align:right;top:672.97px;font-weight:normal;font-style:italic;letter-spacing:-0.3px;'>3.64%</div><div class='abs' style='left:206px;top:157px;width:1px;height:532.11px;background:#ededf0'></div><div class='abs' style='left:269px;top:157px;width:1px;height:532.11px;background:#ededf0'></div><div class='abs' style='left:332px;top:157px;width:1px;height:532.11px;background:#ededf0'></div><div class='abs' style='left:395px;top:157px;width:1px;height:532.11px;background:#a9b9f3'></div><div class='abs' style='left:458px;top:157px;width:1px;height:532.11px;background:#ededf0'></div><div class='abs' style='left:521px;top:157px;width:1px;height:532.11px;background:#ededf0'></div><div class='abs' style='left:584px;top:157px;width:1px;height:532.11px;background:#ededf0'></div><div class='abs' style='left:647px;top:157px;width:1px;height:532.11px;background:#ededf0'></div><div class='abs' style='left:395px;top:295.31px;width:64px;height:23.64px;border:1.5px solid #4f78e8'></div><div class='abs' style='left:827px;top:102px;width:4px;height:364px;border-radius:2px;background:#959cad'></div><div class='abs' style='left:7.8px;top:697.4px;width:479px;height:30px;background:#f9f9fa;border:1px solid #e6e7eb;border-radius:5px'></div><div class='abs' style='left:36.5px;top:698.4px;width:74px;height:30px;background:#fff;border-left:1px solid #ececef;border-right:1px solid #ececef'></div><div class='btn' style='left:14.6px;top:701.3px;width:15.3px;height:15.3px'><svg width='15' height='15' style='position:absolute;left:-0.5px;top:-0.5px' viewBox='0 0 15 15'><path d='M7.5 5v5M5 7.5h5' stroke='#23253a' stroke-width='1.1'/></svg></div><div class='t' style='left:43.6px;top:704.6px;font-weight:bold;font-size:7.6px;color:#15161c'>Consolidated</div><svg width='6' height='6' style='position:absolute;left:96.5px;top:706px' viewBox='0 0 6 6'><path d='M1 2h4L3 4.5z' fill='#23253a'/></svg><div class='t' style='left:117.6px;top:704.6px;font-weight:bold;font-size:7.6px;color:#81859a'>Entity 1 - café</div><svg width='6' height='6' style='position:absolute;left:171.4px;top:706px' viewBox='0 0 6 6'><path d='M1.4 2.2h3.2L3 4.2z' fill='#9a9eb0'/></svg><div class='t' style='left:193px;top:704.6px;font-weight:bold;font-size:7.6px;color:#81859a'>Entity 2 - HQ and e-commerce</div><svg width='6' height='6' style='position:absolute;left:307.7px;top:706px' viewBox='0 0 6 6'><path d='M1.4 2.2h3.2L3 4.2z' fill='#9a9eb0'/></svg><div class='t' style='left:328.9px;top:704.6px;font-weight:bold;font-size:7.6px;color:#81859a'>Hiring plan</div><svg width='6' height='6' style='position:absolute;left:372.4px;top:706px' viewBox='0 0 6 6'><path d='M1.4 2.2h3.2L3 4.2z' fill='#9a9eb0'/></svg><div class='t' style='left:394.3px;top:704.6px;font-weight:bold;font-size:7.6px;color:#81859a'>Assumptions</div><svg width='6' height='6' style='position:absolute;left:446.4px;top:706px' viewBox='0 0 6 6'><path d='M1.4 2.2h3.2L3 4.2z' fill='#9a9eb0'/></svg><div class='sep' style='left:460.3px;top:702px;height:14px'></div><svg width='10' height='8' style='position:absolute;left:469px;top:705px' viewBox='0 0 10 8'><path d='M2 2.5l3 3 3-3' fill='none' stroke='#23253a' stroke-width='1.1'/></svg><div class='abs' style='left:832px;top:92px;width:448px;height:628px;background:#f8f8f8;border-left:1px solid #e6e7eb'></div><div class='abs' style='left:833px;top:92px;width:440px;height:36px;background:#fff;border-bottom:1px solid #e6e7eb'></div><div class='t' style='left:845px;top:110.5px'>Revenue and fixed costs</div><div class='abs' style='left:845px;top:125.5px;width:87px;height:2px;background:#7fcb9b'></div><div class='sep' style='left:1237.5px;top:107px;height:17px;background:#f0f0f3'></div><div class='abs' style='left:1244px;top:107.5px;width:16px;height:16px;background:#6cc08b;border-radius:3px'><svg width='16' height='16' style='position:absolute;left:0;top:0' viewBox='0 0 16 16'><path d='M8 4.2v7.6M4.2 8h7.6' stroke='#fff' stroke-width='1'/></svg></div><div class='abs' style='left:1272.5px;top:92px;width:1px;height:628px;background:#ececef'></div><div class='abs' style='left:1273.5px;top:92px;width:6.5px;height:628px;background:#f6f6f6'></div><div class='abs' style='left:1274.7px;top:108px;width:3.6px;height:403px;border-radius:2px;background:#c4c4c6'></div><div class='t' style='left:952px;width:200px;text-align:center;top:147px;font-size:10.5px;line-height:12px;color:#2a2c40'>Revenue and fixed costs</div><div class='btn' style='left:997.7px;top:166.7px;width:19.2px;height:17.7px'><svg width='20' height='18' style='position:absolute;left:-1px;top:-1px' viewBox='0 0 20 18'><g transform='translate(10 9)'><path d='M3.82 -1.18 L5.47 -0.55 L5.47 0.55 L3.82 1.18 L3.54 1.87 L4.26 3.48 L3.48 4.26 L1.87 3.54 L1.18 3.82 L0.55 5.47 L-0.55 5.47 L-1.18 3.82 L-1.87 3.54 L-3.48 4.26 L-4.26 3.48 L-3.54 1.87 L-3.82 1.18 L-5.47 0.55 L-5.47 -0.55 L-3.82 -1.18 L-3.54 -1.87 L-4.26 -3.48 L-3.48 -4.26 L-1.87 -3.54 L-1.18 -3.82 L-0.55 -5.47 L0.55 -5.47 L1.18 -3.82 L1.87 -3.54 L3.48 -4.26 L4.26 -3.48 L3.54 -1.87Z' fill='none' stroke='#15161f' stroke-width='1' stroke-linejoin='round'/><circle r='1.5' fill='none' stroke='#15161f' stroke-width='1'/></g></svg></div><div class='btn' style='left:1021.5px;top:166.5px;width:85.5px;height:18px'><svg width='12' height='12' style='position:absolute;left:3.5px;top:2px' viewBox='0 0 12 12'><rect x='1.5' y='1.5' width='9' height='9.5' rx='1' fill='none' stroke='#6cc08b' stroke-width='0.9'/><path d='M1.5 4.3h9' stroke='#6cc08b' stroke-width='0.9'/></svg><div class='t' style='left:18px;top:3px'>Jan '23 - Dec '23</div></div><div class='abs' style='left:852.5px;top:207.5px;width:400px;height:234px;background:#fff;border:1px solid #e6e7eb;border-radius:5px'></div><div class='abs' style='left:852.5px;top:466px;width:400px;height:234px;background:#fff;border:1px solid #e6e7eb;border-radius:5px'></div><svg width='1280' height='720' style='position:absolute;left:0;top:0' viewBox='0 0 1280 720' font-family='Liberation Sans'><text x='1052.5' y='231' font-size='7.45' font-weight='bold' fill='#5f5f5f' text-anchor='middle'>Revenue | Anchor vs. Forecast</text><line x1='901.4' y1='380.20' x2='1236.1' y2='380.20' stroke='#efefef' stroke-width='0.8'/><text x='895.3' y='382.80' font-size='7.5' fill='#666' text-anchor='end'>0</text><line x1='901.4' y1='352.02' x2='1236.1' y2='352.02' stroke='#efefef' stroke-width='0.8'/><text x='895.3' y='354.62' font-size='7.5' fill='#666' text-anchor='end'>50,000</text><line x1='901.4' y1='323.84' x2='1236.1' y2='323.84' stroke='#efefef' stroke-width='0.8'/><text x='895.3' y='326.44' font-size='7.5' fill='#666' text-anchor='end'>100,000</text><line x1='901.4' y1='295.66' x2='1236.1' y2='295.66' stroke='#efefef' stroke-width='0.8'/><text x='895.3' y='298.26' font-size='7.5' fill='#666' text-anchor='end'>150,000</text><line x1='901.4' y1='267.48' x2='1236.1' y2='267.48' stroke='#efefef' stroke-width='0.8'/><text x='895.3' y='270.08' font-size='7.5' fill='#666' text-anchor='end'>200,000</text><line x1='901.4' y1='239.30' x2='1236.1' y2='239.30' stroke='#efefef' stroke-width='0.8'/><text x='895.3' y='241.90' font-size='7.5' fill='#666' text-anchor='end'>250,000</text><line x1='905.40' y1='239.3' x2='905.40' y2='384.2' stroke='#efefef' stroke-width='0.8'/><text transform='translate(906.90 393.00) rotate(-30)' font-size='7.5' fill='#666' text-anchor='end'>Jan '23</text><line x1='935.46' y1='239.3' x2='935.46' y2='384.2' stroke='#efefef' stroke-width='0.8'/><text transform='translate(936.96 393.00) rotate(-30)' font-size='7.5' fill='#666' text-anchor='end'>Feb '23</text><line x1='965.53' y1='239.3' x2='965.53' y2='384.2' stroke='#efefef' stroke-width='0.8'/><text transform='translate(967.03 393.00) rotate(-30)' font-size='7.5' fill='#666' text-anchor='end'>Mar '23</text><line x1='995.59' y1='239.3' x2='995.59' y2='384.2' stroke='#efefef' stroke-width='0.8'/><text transform='translate(997.09 393.00) rotate(-30)' font-size='7.5' fill='#666' text-anchor='end'>Apr '23</text><line x1='1025.65' y1='239.3' x2='1025.65' y2='384.2' stroke='#efefef' stroke-width='0.8'/><text transform='translate(1027.15 393.00) rotate(-30)' font-size='7.5' fill='#666' text-anchor='end'>May '23</text><line x1='1055.72' y1='239.3' x2='1055.72' y2='384.2' stroke='#efefef' stroke-width='0.8'/><text transform='translate(1057.22 393.00) rotate(-30)' font-size='7.5' fill='#666' text-anchor='end'>Jun '23</text><line x1='1085.78' y1='239.3' x2='1085.78' y2='384.2' stroke='#efefef' stroke-width='0.8'/><text transform='translate(1087.28 393.00) rotate(-30)' font-size='7.5' fill='#666' text-anchor='end'>Jul '23</text><line x1='1115.85' y1='239.3' x2='1115.85' y2='384.2' stroke='#efefef' stroke-width='0.8'/><text transform='translate(1117.35 393.00) rotate(-30)' font-size='7.5' fill='#666' text-anchor='end'>Aug '23</text><line x1='1145.91' y1='239.3' x2='1145.91' y2='384.2' stroke='#efefef' stroke-width='0.8'/><text transform='translate(1147.41 393.00) rotate(-30)' font-size='7.5' fill='#666' text-anchor='end'>Sep '23</text><line x1='1175.97' y1='239.3' x2='1175.97' y2='384.2' stroke='#efefef' stroke-width='0.8'/><text transform='translate(1177.47 393.00) rotate(-30)' font-size='7.5' fill='#666' text-anchor='end'>Oct '23</text><line x1='1206.04' y1='239.3' x2='1206.04' y2='384.2' stroke='#efefef' stroke-width='0.8'/><text transform='translate(1207.54 393.00) rotate(-30)' font-size='7.5' fill='#666' text-anchor='end'>Nov '23</text><line x1='1236.10' y1='239.3' x2='1236.10' y2='384.2' stroke='#efefef' stroke-width='0.8'/><text transform='translate(1237.60 393.00) rotate(-30)' font-size='7.5' fill='#666' text-anchor='end'>Dec '23</text><line x1='905.4' y1='239.3' x2='905.4' y2='380.2' stroke='#e3e3e3' stroke-width='0.8'/><line x1='905.4' y1='380.2' x2='1236.1' y2='380.2' stroke='#dcdcdc' stroke-width='0.8'/><path d='M905.40 309.75 C917.43 309.07 923.60 309.84 935.46 308.06 C947.65 306.23 953.93 304.86 965.53 300.73 C977.98 296.30 983.01 290.30 995.59 286.64 C1007.06 283.31 1014.23 286.69 1025.65 283.26 C1038.28 279.47 1043.31 273.49 1055.72 268.61 C1067.36 264.02 1074.28 258.19 1085.78 259.59 C1098.33 261.12 1103.07 273.06 1115.85 275.93 C1127.12 278.47 1134.37 271.17 1145.91 273.12 C1158.42 275.23 1163.61 281.91 1175.97 286.08 C1187.66 290.02 1196.27 297.71 1206.04 293.41 C1220.32 287.11 1224.07 273.12 1236.10 259.59' fill='none' stroke='#dcdbd8' stroke-width='1.1' stroke-dasharray='1.2 1.6'/><circle cx='905.40' cy='309.75' r='1.9' fill='#e2e1de'/><circle cx='935.46' cy='308.06' r='1.9' fill='#e2e1de'/><circle cx='965.53' cy='300.73' r='1.9' fill='#e2e1de'/><circle cx='995.59' cy='286.64' r='1.9' fill='#e2e1de'/><circle cx='1025.65' cy='283.26' r='1.9' fill='#e2e1de'/><circle cx='1055.72' cy='268.61' r='1.9' fill='#e2e1de'/><circle cx='1085.78' cy='259.59' r='1.9' fill='#e2e1de'/><circle cx='1115.85' cy='275.93' r='1.9' fill='#e2e1de'/><circle cx='1145.91' cy='273.12' r='1.9' fill='#e2e1de'/><circle cx='1175.97' cy='286.08' r='1.9' fill='#e2e1de'/><circle cx='1206.04' cy='293.41' r='1.9' fill='#e2e1de'/><circle cx='1236.10' cy='259.59' r='1.9' fill='#e2e1de'/><path d='M905.40 310.31 C917.43 309.86 923.58 310.75 935.46 309.19 C947.63 307.59 953.46 304.91 965.53 302.42' fill='none' stroke='#1e2d36' stroke-width='1.3'/><path d='M965.53 302.42 C977.51 299.95 983.50 298.60 995.59 296.79 C1007.55 294.99 1014.23 296.83 1025.65 293.41 C1038.28 289.62 1043.28 283.53 1055.72 278.75 C1067.33 274.29 1074.26 268.89 1085.78 270.30 C1098.31 271.82 1103.12 283.33 1115.85 286.08 C1127.17 288.52 1134.37 281.31 1145.91 283.26 C1158.42 285.37 1163.61 292.05 1175.97 296.22 C1187.66 300.17 1196.27 307.85 1206.04 303.55 C1220.32 297.26 1224.07 283.26 1236.10 269.73' fill='none' stroke='#1e2d36' stroke-width='1.2' stroke-dasharray='1.2 1.5'/><circle cx='905.40' cy='310.31' r='1.9' fill='#1e2d36'/><circle cx='935.46' cy='309.19' r='1.9' fill='#1e2d36'/><circle cx='965.53' cy='302.42' r='1.9' fill='#1e2d36'/><circle cx='995.59' cy='296.79' r='1.9' fill='#1e2d36'/><circle cx='1025.65' cy='293.41' r='1.9' fill='#1e2d36'/><circle cx='1055.72' cy='278.75' r='1.9' fill='#1e2d36'/><circle cx='1085.78' cy='270.30' r='1.9' fill='#1e2d36'/><circle cx='1115.85' cy='286.08' r='1.9' fill='#1e2d36'/><circle cx='1145.91' cy='283.26' r='1.9' fill='#1e2d36'/><circle cx='1175.97' cy='296.22' r='1.9' fill='#1e2d36'/><circle cx='1206.04' cy='303.55' r='1.9' fill='#1e2d36'/><circle cx='1236.10' cy='269.73' r='1.9' fill='#1e2d36'/><circle cx='881.6' cy='421.1' r='2.8' fill='#1e2d36'/><text x='887.3' y='423.8' font-size='7.55' fill='#555'>Consolidated P&amp;L | Revenue (Latest forecast)</text><circle cx='1049.2' cy='421.1' r='2.8' fill='#e2e1de'/><text x='1055' y='423.8' font-size='7.55' fill='#555'>Consolidated P&amp;L | Revenue (Anchor budget 2023)</text><text x='1052.5' y='490' font-size='7.45' font-weight='bold' fill='#5f5f5f' text-anchor='middle'>Fixed Costs | Anchor vs. Forecast</text><line x1='901.3' y1='622.30' x2='1241.7' y2='622.30' stroke='#efefef' stroke-width='0.8'/><text x='895.3' y='624.90' font-size='7.5' fill='#666' text-anchor='end'>0</text><line x1='901.3' y1='601.62' x2='1241.7' y2='601.62' stroke='#efefef' stroke-width='0.8'/><text x='895.3' y='604.22' font-size='7.5' fill='#666' text-anchor='end'>20,000</text><line x1='901.3' y1='580.93' x2='1241.7' y2='580.93' stroke='#efefef' stroke-width='0.8'/><text x='895.3' y='583.53' font-size='7.5' fill='#666' text-anchor='end'>40,000</text><line x1='901.3' y1='560.25' x2='1241.7' y2='560.25' stroke='#efefef' stroke-width='0.8'/><text x='895.3' y='562.85' font-size='7.5' fill='#666' text-anchor='end'>60,000</text><line x1='901.3' y1='539.57' x2='1241.7' y2='539.57' stroke='#efefef' stroke-width='0.8'/><text x='895.3' y='542.17' font-size='7.5' fill='#666' text-anchor='end'>80,000</text><line x1='901.3' y1='518.88' x2='1241.7' y2='518.88' stroke='#efefef' stroke-width='0.8'/><text x='895.3' y='521.48' font-size='7.5' fill='#666' text-anchor='end'>100,000</text><line x1='901.3' y1='498.20' x2='1241.7' y2='498.20' stroke='#efefef' stroke-width='0.8'/><text x='895.3' y='500.80' font-size='7.5' fill='#666' text-anchor='end'>120,000</text><line x1='905.30' y1='498.2' x2='905.30' y2='626.3' stroke='#efefef' stroke-width='0.8'/><line x1='933.33' y1='498.2' x2='933.33' y2='626.3' stroke='#efefef' stroke-width='0.8'/><line x1='961.37' y1='498.2' x2='961.37' y2='626.3' stroke='#efefef' stroke-width='0.8'/><line x1='989.40' y1='498.2' x2='989.40' y2='626.3' stroke='#efefef' stroke-width='0.8'/><line x1='1017.43' y1='498.2' x2='1017.43' y2='626.3' stroke='#efefef' stroke-width='0.8'/><line x1='1045.47' y1='498.2' x2='1045.47' y2='626.3' stroke='#efefef' stroke-width='0.8'/><line x1='1073.50' y1='498.2' x2='1073.50' y2='626.3' stroke='#efefef' stroke-width='0.8'/><line x1='1101.53' y1='498.2' x2='1101.53' y2='626.3' stroke='#efefef' stroke-width='0.8'/><line x1='1129.57' y1='498.2' x2='1129.57' y2='626.3' stroke='#efefef' stroke-width='0.8'/><line x1='1157.60' y1='498.2' x2='1157.60' y2='626.3' stroke='#efefef' stroke-width='0.8'/><line x1='1185.63' y1='498.2' x2='1185.63' y2='626.3' stroke='#efefef' stroke-width='0.8'/><line x1='1213.67' y1='498.2' x2='1213.67' y2='626.3' stroke='#efefef' stroke-width='0.8'/><line x1='1241.70' y1='498.2' x2='1241.70' y2='626.3' stroke='#efefef' stroke-width='0.8'/><text transform='translate(921.32 635.30) rotate(-30)' font-size='7.5' fill='#666' text-anchor='end'>Jan '23</text><text transform='translate(949.35 635.30) rotate(-30)' font-size='7.5' fill='#666' text-anchor='end'>Feb '23</text><text transform='translate(977.38 635.30) rotate(-30)' font-size='7.5' fill='#666' text-anchor='end'>Mar '23</text><text transform='translate(1005.42 635.30) rotate(-30)' font-size='7.5' fill='#666' text-anchor='end'>Apr '23</text><text transform='translate(1033.45 635.30) rotate(-30)' font-size='7.5' fill='#666' text-anchor='end'>May '23</text><text transform='translate(1061.48 635.30) rotate(-30)' font-size='7.5' fill='#666' text-anchor='end'>Jun '23</text><text transform='translate(1089.52 635.30) rotate(-30)' font-size='7.5' fill='#666' text-anchor='end'>Jul '23</text><text transform='translate(1117.55 635.30) rotate(-30)' font-size='7.5' fill='#666' text-anchor='end'>Aug '23</text><text transform='translate(1145.58 635.30) rotate(-30)' font-size='7.5' fill='#666' text-anchor='end'>Sep '23</text><text transform='translate(1173.62 635.30) rotate(-30)' font-size='7.5' fill='#666' text-anchor='end'>Oct '23</text><text transform='translate(1201.65 635.30) rotate(-30)' font-size='7.5' fill='#666' text-anchor='end'>Nov '23</text><text transform='translate(1229.68 635.30) rotate(-30)' font-size='7.5' fill='#666' text-anchor='end'>Dec '23</text><line x1='905.3' y1='498.2' x2='905.3' y2='622.3' stroke='#e3e3e3' stroke-width='0.8'/><line x1='905.3' y1='622.3' x2='1241.7' y2='622.3' stroke='#dcdcdc' stroke-width='0.8'/><path d='M919.70 622.30 V542.19 Q919.70 540.19 921.70 540.19 H927.80 Q929.80 540.19 929.80 542.19 V622.30 Z' fill='#e9e8e5'/><path d='M908.40 622.30 V542.19 Q908.40 540.19 910.40 540.19 H916.50 Q918.50 540.19 918.50 542.19 V622.30 Z' fill='#1e2d36'/><path d='M947.73 622.30 V542.19 Q947.73 540.19 949.73 540.19 H955.83 Q957.83 540.19 957.83 542.19 V622.30 Z' fill='#e9e8e5'/><path d='M936.43 622.30 V542.19 Q936.43 540.19 938.43 540.19 H944.53 Q946.53 540.19 946.53 542.19 V622.30 Z' fill='#1e2d36'/><path d='M975.77 622.30 V542.19 Q975.77 540.19 977.77 540.19 H983.87 Q985.87 540.19 985.87 542.19 V622.30 Z' fill='#e9e8e5'/><path d='M964.47 622.30 V542.19 Q964.47 540.19 966.47 540.19 H972.57 Q974.57 540.19 974.57 542.19 V622.30 Z' fill='#1e2d36'/><path d='M1003.80 622.30 V532.78 Q1003.80 530.78 1005.80 530.78 H1011.90 Q1013.90 530.78 1013.90 532.78 V622.30 Z' fill='#e9e8e5'/><path d='M992.50 622.30 V532.57 Q992.50 530.57 994.50 530.57 H1000.60 Q1002.60 530.57 1002.60 532.57 V622.30 Z' fill='#76858a'/><path d='M1031.83 622.30 V542.08 Q1031.83 540.08 1033.83 540.08 H1039.93 Q1041.93 540.08 1041.93 542.08 V622.30 Z' fill='#e9e8e5'/><path d='M1020.53 622.30 V542.08 Q1020.53 540.08 1022.53 540.08 H1028.63 Q1030.63 540.08 1030.63 542.08 V622.30 Z' fill='#76858a'/><path d='M1059.87 622.30 V531.74 Q1059.87 529.74 1061.87 529.74 H1067.97 Q1069.97 529.74 1069.97 531.74 V622.30 Z' fill='#e9e8e5'/><path d='M1048.57 622.30 V531.74 Q1048.57 529.74 1050.57 529.74 H1056.67 Q1058.67 529.74 1058.67 531.74 V622.30 Z' fill='#76858a'/><path d='M1087.90 622.30 V511.27 Q1087.90 509.27 1089.90 509.27 H1096.00 Q1098.00 509.27 1098.00 511.27 V622.30 Z' fill='#e9e8e5'/><path d='M1076.60 622.30 V511.27 Q1076.60 509.27 1078.60 509.27 H1084.70 Q1086.70 509.27 1086.70 511.27 V622.30 Z' fill='#76858a'/><path d='M1115.93 622.30 V541.98 Q1115.93 539.98 1117.93 539.98 H1124.03 Q1126.03 539.98 1126.03 541.98 V622.30 Z' fill='#e9e8e5'/><path d='M1104.63 622.30 V541.98 Q1104.63 539.98 1106.63 539.98 H1112.73 Q1114.73 539.98 1114.73 541.98 V622.30 Z' fill='#76858a'/><path d='M1143.97 622.30 V541.98 Q1143.97 539.98 1145.97 539.98 H1152.07 Q1154.07 539.98 1154.07 541.98 V622.30 Z' fill='#e9e8e5'/><path d='M1132.67 622.30 V541.98 Q1132.67 539.98 1134.67 539.98 H1140.77 Q1142.77 539.98 1142.77 541.98 V622.30 Z' fill='#76858a'/><path d='M1172.00 622.30 V541.98 Q1172.00 539.98 1174.00 539.98 H1180.10 Q1182.10 539.98 1182.10 541.98 V622.30 Z' fill='#e9e8e5'/><path d='M1160.70 622.30 V541.98 Q1160.70 539.98 1162.70 539.98 H1168.80 Q1170.80 539.98 1170.80 541.98 V622.30 Z' fill='#76858a'/><path d='M1200.03 622.30 V541.98 Q1200.03 539.98 1202.03 539.98 H1208.13 Q1210.13 539.98 1210.13 541.98 V622.30 Z' fill='#e9e8e5'/><path d='M1188.73 622.30 V541.98 Q1188.73 539.98 1190.73 539.98 H1196.83 Q1198.83 539.98 1198.83 541.98 V622.30 Z' fill='#76858a'/><path d='M1228.07 622.30 V541.98 Q1228.07 539.98 1230.07 539.98 H1236.17 Q1238.17 539.98 1238.17 541.98 V622.30 Z' fill='#e9e8e5'/><path d='M1216.77 622.30 V541.98 Q1216.77 539.98 1218.77 539.98 H1224.87 Q1226.87 539.98 1226.87 541.98 V622.30 Z' fill='#76858a'/><rect x='904.25' y='577.04' width='18.40' height='8.4' rx='2' fill='#1e2d36' stroke='#fff' stroke-width='0.6'/><text x='913.45' y='583.24' font-size='6.1' font-weight='bold' fill='#fff' text-anchor='middle'>79.4K</text><rect x='932.28' y='577.04' width='18.40' height='8.4' rx='2' fill='#1e2d36' stroke='#fff' stroke-width='0.6'/><text x='941.48' y='583.24' font-size='6.1' font-weight='bold' fill='#fff' text-anchor='middle'>79.4K</text><rect x='960.32' y='577.04' width='18.40' height='8.4' rx='2' fill='#1e2d36' stroke='#fff' stroke-width='0.6'/><text x='969.52' y='583.24' font-size='6.1' font-weight='bold' fill='#fff' text-anchor='middle'>79.4K</text><rect x='988.35' y='572.23' width='18.40' height='8.4' rx='2' fill='#1e2d36' stroke='#fff' stroke-width='0.6'/><text x='997.55' y='578.43' font-size='6.1' font-weight='bold' fill='#fff' text-anchor='middle'>88.7K</text><rect x='1016.38' y='576.99' width='18.40' height='8.4' rx='2' fill='#1e2d36' stroke='#fff' stroke-width='0.6'/><text x='1025.58' y='583.19' font-size='6.1' font-weight='bold' fill='#fff' text-anchor='middle'>79.5K</text><rect x='1044.42' y='571.82' width='18.40' height='8.4' rx='2' fill='#1e2d36' stroke='#fff' stroke-width='0.6'/><text x='1053.62' y='578.02' font-size='6.1' font-weight='bold' fill='#fff' text-anchor='middle'>89.5K</text><rect x='1073.65' y='561.58' width='16.00' height='8.4' rx='2' fill='#1e2d36' stroke='#fff' stroke-width='0.6'/><text x='1081.65' y='567.78' font-size='6.1' font-weight='bold' fill='#fff' text-anchor='middle'>110K</text><rect x='1100.48' y='576.94' width='18.40' height='8.4' rx='2' fill='#1e2d36' stroke='#fff' stroke-width='0.6'/><text x='1109.68' y='583.14' font-size='6.1' font-weight='bold' fill='#fff' text-anchor='middle'>79.6K</text><rect x='1128.52' y='576.94' width='18.40' height='8.4' rx='2' fill='#1e2d36' stroke='#fff' stroke-width='0.6'/><text x='1137.72' y='583.14' font-size='6.1' font-weight='bold' fill='#fff' text-anchor='middle'>79.6K</text><rect x='1156.55' y='576.94' width='18.40' height='8.4' rx='2' fill='#1e2d36' stroke='#fff' stroke-width='0.6'/><text x='1165.75' y='583.14' font-size='6.1' font-weight='bold' fill='#fff' text-anchor='middle'>79.6K</text><rect x='1184.58' y='576.94' width='18.40' height='8.4' rx='2' fill='#1e2d36' stroke='#fff' stroke-width='0.6'/><text x='1193.78' y='583.14' font-size='6.1' font-weight='bold' fill='#fff' text-anchor='middle'>79.6K</text><rect x='1212.62' y='576.94' width='18.40' height='8.4' rx='2' fill='#1e2d36' stroke='#fff' stroke-width='0.6'/><text x='1221.82' y='583.14' font-size='6.1' font-weight='bold' fill='#fff' text-anchor='middle'>79.6K</text><circle cx='970.5' cy='663.5' r='2.8' fill='#1e2d36'/><text x='976' y='666.2' font-size='7.55' fill='#555'>Consolidated P&amp;L | Fixed costs (Latest forecast)</text><circle cx='961' cy='679.6' r='2.8' fill='#e2e1de'/><text x='966.5' y='682.2' font-size='7.55' fill='#555'>Consolidated P&amp;L | Fixed costs (Anchor budget 2023)</text></svg></div></body></html>
